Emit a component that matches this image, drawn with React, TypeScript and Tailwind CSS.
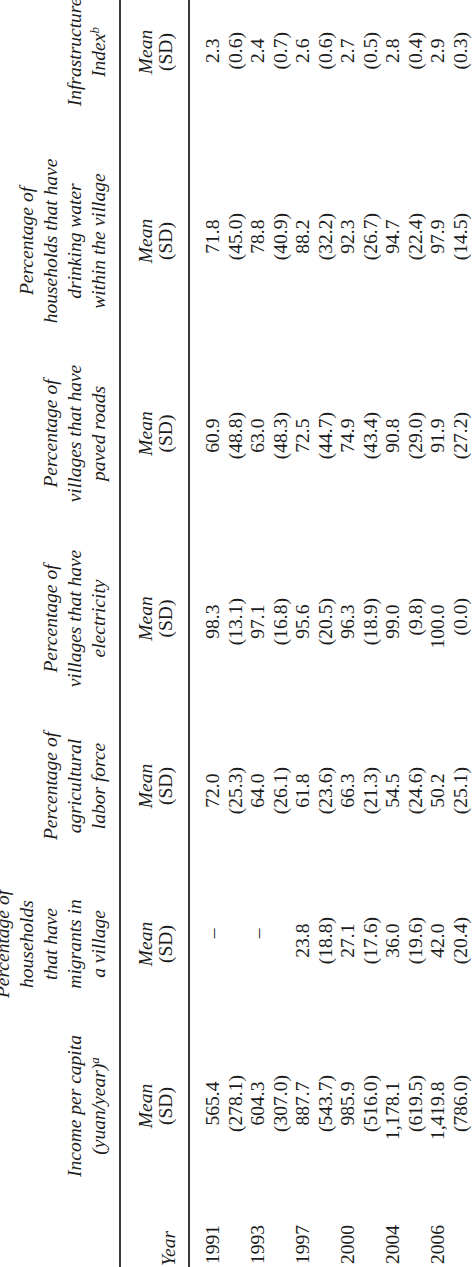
import type { ReactNode } from "react";

interface Column {
  key: string;
  width: string;
  pad: string;
  title: ReactNode[];
  rows: [string, string][];
}

const years = ["1991", "1993", "1997", "2000", "2004", "2006"];

const columns: Column[] = [
  {
    key: "income",
    width: "w-[166px]",
    pad: "pr-[52px]",
    title: [
      "Income per capita",
      <>
        (yuan/year)<sup className="text-[13px]">a</sup>
      </>,
    ],
    rows: [
      ["565.4", "(278.1)"],
      ["604.3", "(307.0)"],
      ["887.7", "(543.7)"],
      ["985.9", "(516.0)"],
      ["1,178.1", "(619.5)"],
      ["1,419.8", "(786.0)"],
    ],
  },
  {
    key: "migrants",
    width: "w-[158px]",
    pad: "pr-[52px]",
    title: ["Percentage of", "households", "that have", "migrants in", "a village"],
    rows: [
      ["–", ""],
      ["–", ""],
      ["23.8", "(18.8)"],
      ["27.1", "(17.6)"],
      ["36.0", "(19.6)"],
      ["42.0", "(20.4)"],
    ],
  },
  {
    key: "labor",
    width: "w-[158px]",
    pad: "pr-[60px]",
    title: ["Percentage of", "agricultural", "labor force"],
    rows: [
      ["72.0", "(25.3)"],
      ["64.0", "(26.1)"],
      ["61.8", "(23.6)"],
      ["66.3", "(21.3)"],
      ["54.5", "(24.6)"],
      ["50.2", "(25.1)"],
    ],
  },
  {
    key: "electricity",
    width: "w-[177px]",
    pad: "pr-[68px]",
    title: ["Percentage of", "villages that have", "electricity"],
    rows: [
      ["98.3", "(13.1)"],
      ["97.1", "(16.8)"],
      ["95.6", "(20.5)"],
      ["96.3", "(18.9)"],
      ["99.0", "(9.8)"],
      ["100.0", "(0.0)"],
    ],
  },
  {
    key: "roads",
    width: "w-[193px]",
    pad: "pr-[75px]",
    title: ["Percentage of", "villages that have", "paved roads"],
    rows: [
      ["60.9", "(48.8)"],
      ["63.0", "(48.3)"],
      ["72.5", "(44.7)"],
      ["74.9", "(43.4)"],
      ["90.8", "(29.0)"],
      ["91.9", "(27.2)"],
    ],
  },
  {
    key: "water",
    width: "w-[192px]",
    pad: "pr-[68px]",
    title: ["Percentage of", "households that have", "drinking water", "within the village"],
    rows: [
      ["71.8", "(45.0)"],
      ["78.8", "(40.9)"],
      ["88.2", "(32.2)"],
      ["92.3", "(26.7)"],
      ["94.7", "(22.4)"],
      ["97.9", "(14.5)"],
    ],
  },
  {
    key: "infra",
    width: "w-[186px]",
    pad: "pr-[73px]",
    title: [
      "Infrastructure",
      <>
        Index<sup className="text-[13px]">b</sup>
      </>,
    ],
    rows: [
      ["2.3", "(0.6)"],
      ["2.4", "(0.7)"],
      ["2.6", "(0.6)"],
      ["2.7", "(0.5)"],
      ["2.8", "(0.4)"],
      ["2.9", "(0.3)"],
    ],
  },
];

function MeanValue({ value }: { value: string }) {
  if (value === "–") {
    return (
      <div>
        <span className="mr-[5px]">–</span>
        <span className="invisible">)</span>
      </div>
    );
  }
  return (
    <div>
      {value}
      <span className="invisible">)</span>
    </div>
  );
}

export default function App() {
  return (
    <div className="w-[474px] h-[1267px] overflow-hidden bg-white">
      <div className="w-[1267px] h-[474px] overflow-hidden origin-top-left translate-y-[1267px] -rotate-90 text-[#1c1c1c] font-['Liberation_Serif',serif] text-[19.5px]">
        <div className="w-[1308px]">
          {/* column titles */}
          <div className="flex h-[119px]">
            <div className="w-[78px]" />
            {columns.map((col) => (
              <div
                key={col.key}
                className={`${col.width} flex flex-col items-center justify-end pb-[8px] italic leading-[24px] whitespace-nowrap`}
              >
                {col.title.map((line, i) => (
                  <div key={i}>{line}</div>
                ))}
              </div>
            ))}
          </div>
          <div className="h-[2px] bg-[#3a3a3a]" />

          {/* Mean / SD */}
          <div className="flex h-[67px]">
            <div className="w-[78px] flex items-end pl-[1px] pb-[10px] italic leading-[19.5px]">
              Year
            </div>
            {columns.map((col) => (
              <div
                key={col.key}
                className={`${col.width} flex flex-col items-center justify-end pb-[13px] leading-[19.5px]`}
              >
                <div className="italic">Mean</div>
                <div>(SD)</div>
              </div>
            ))}
          </div>
          <div className="h-[2px] bg-[#3a3a3a]" />

          {/* data */}
          <div className="flex pt-[12px] leading-[22.5px]">
            <div className="w-[78px] flex flex-col pl-[3px]">
              {years.map((y) => (
                <div key={y} className="h-[45px]">
                  {y}
                </div>
              ))}
            </div>
            {columns.map((col) => (
              <div key={col.key} className={`${col.width} flex flex-col text-right ${col.pad}`}>
                {col.rows.map(([mean, sd], i) => (
                  <div key={i} className="h-[45px]">
                    <MeanValue value={mean} />
                    <div>{sd}</div>
                  </div>
                ))}
              </div>
            ))}
          </div>
        </div>
      </div>
    </div>
  );
}
